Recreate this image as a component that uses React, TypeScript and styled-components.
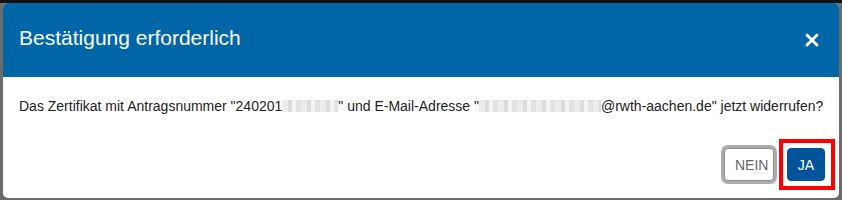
import React from 'react';
import styled, { createGlobalStyle } from 'styled-components';
import { X } from 'lucide-react';

const GlobalStyle = createGlobalStyle`
  html, body {
    margin: 0;
    padding: 0;
    background: #4a4a4a;
    font-family: Arial, "Liberation Sans", sans-serif;
  }
`;

const Backdrop = styled.div`
  height: 200px;
  box-sizing: border-box;
  padding: 3px 3px 0 3px;
  background: linear-gradient(#111 0 3px, #6b6b6b 3px);
  overflow: hidden;
`;

const Dialog = styled.div`
  background: #fff;
  border-radius: 5px;
  overflow: hidden;
  height: 195px;
  display: flex;
  flex-direction: column;
`;

const Header = styled.div`
  height: 74px;
  flex: none;
  background: #0066a7;
  color: #fff;
  display: flex;
  align-items: center;
  justify-content: space-between;
  padding: 0 16px 0 16px;
`;

const Title = styled.h4`
  margin: 0 0 5px;
  font-size: 21px;
  font-weight: normal;
  line-height: 24px;
`;

const CloseButton = styled.button`
  border: 0;
  background: none;
  color: #fff;
  padding: 0;
  width: 22px;
  height: 22px;
  display: flex;
  align-items: center;
  justify-content: center;
  cursor: pointer;
`;

const Body = styled.div`
  padding: 19px 16px 20px;
  font-size: 14px;
  line-height: 20px;
  color: #222;
  white-space: nowrap;
`;

const Blurred = styled.span<{ $w: number }>`
  display: inline-block;
  vertical-align: middle;
  width: ${(p) => p.$w}px;
  height: 12px;
  margin-top: -3px;
  background:
    repeating-linear-gradient(90deg, #ececec 0 6px, #dcdcdc 6px 10px, #f4f4f4 10px 14px, #e2e2e2 14px 19px);
`;

const Footer = styled.div`
  display: flex;
  justify-content: flex-end;
  align-items: center;
  gap: 13px;
  padding: 12px 14px 0 0;
`;

const Button = styled.button<{ $primary?: boolean }>`
  height: 33px;
  padding: 0 10px;
  font-family: Arial, "Liberation Sans", sans-serif;
  font-size: 14px;
  border-radius: 4px;
  border: 1px solid ${(p) => (p.$primary ? '#01539c' : '#8f8f8f')};
  background: ${(p) => (p.$primary ? '#01539c' : '#fff')};
  color: ${(p) => (p.$primary ? '#fff' : '#666')};
  box-shadow: ${(p) => (p.$primary ? 'none' : '0 0 0 3px #acacac')};
`;

/* red annotation frame drawn over the layout, not taking space */
const Marker = styled.span`
  display: inline-flex;
  border: 4px solid #ff0000;
  padding: 5px 6px 5px 4px;
  margin: -9px -10px -9px -8px;
`;

export default function App() {
  return (
    <>
      <GlobalStyle />
      <Backdrop>
        <Dialog>
          <Header>
            <Title>Bestätigung erforderlich</Title>
            <CloseButton aria-label="Schließen">
              <X size={20} strokeWidth={3.4} />
            </CloseButton>
          </Header>
          <Body>
            Das Zertifikat mit Antragsnummer "240201<Blurred $w={56} />" und E-Mail-Adresse "
            <Blurred $w={122} />@rwth-aachen.de" jetzt widerrufen?
          </Body>
          <Footer>
            <Button style={{ width: 50 }}>NEIN</Button>
            <Marker>
              <Button $primary style={{ width: 38, padding: 0 }}>JA</Button>
            </Marker>
          </Footer>
        </Dialog>
      </Backdrop>
    </>
  );
}
